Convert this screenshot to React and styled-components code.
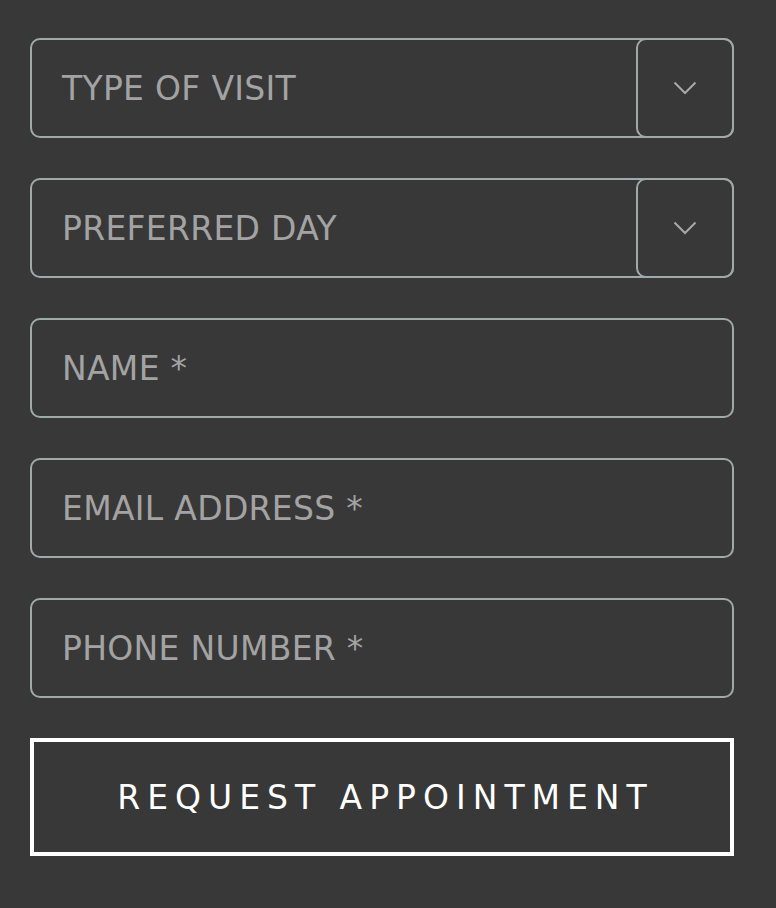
import React from 'react';
import styled, { createGlobalStyle } from 'styled-components';

const Global = createGlobalStyle`
  html, body {
    margin: 0;
    padding: 0;
    background: #383838;
  }
`;

const Form = styled.form`
  width: 704px;
  padding: 38px 0 52px 30px;

  display: flex;
  flex-direction: column;
  gap: 40px;

  font-family: "DejaVu Sans", "Noto Sans", sans-serif;
`;

const Field = styled.div`
  box-sizing: border-box;
  height: 100px;

  display: flex;
  align-items: stretch;

  border: 2px solid #9eaba9;
  border-radius: 10px;
`;

const Label = styled.div`
  flex: 1;
  display: flex;
  align-items: center;
  padding-left: 30px;

  color: #a3a3a3;
  font-size: 33px;
  letter-spacing: 0.3px;
`;

const TextInput = styled.input`
  flex: 1;
  min-width: 0;
  padding: 0 0 0 30px;

  border: none;
  outline: none;
  background: transparent;

  color: #a3a3a3;
  font-family: inherit;
  font-size: 33px;
  letter-spacing: 0.3px;

  &::placeholder {
    color: #a3a3a3;
    opacity: 1;
  }
`;

const Toggle = styled.div`
  box-sizing: border-box;
  width: 98px;
  margin: -2px -2px -2px 0;

  display: flex;
  align-items: center;
  justify-content: center;

  border: 2px solid #9eaba9;
  border-radius: 10px;
`;

const Submit = styled.button`
  box-sizing: border-box;
  height: 118px;
  padding: 0 0 0 7px;

  border: 4px solid #fff;
  background: transparent;

  color: #fff;
  font-family: inherit;
  font-size: 33px;
  letter-spacing: 7px;
  cursor: pointer;
`;

const Chevron = () => (
  <svg width="24" height="14" viewBox="0 0 24 14" fill="none">
    <path d="M1.5 1.5 L12 12 L22.5 1.5" stroke="#a8a8a8" strokeWidth="2" />
  </svg>
);

function Select({ label }) {
  return (
    <Field>
      <Label>{label}</Label>
      <Toggle>
        <Chevron />
      </Toggle>
    </Field>
  );
}

function Input({ placeholder }) {
  return (
    <Field>
      <TextInput placeholder={placeholder} />
    </Field>
  );
}

export default function App() {
  return (
    <>
      <Global />
      <Form onSubmit={(e) => e.preventDefault()}>
        <Select label="TYPE OF VISIT" />
        <Select label="PREFERRED DAY" />
        <Input placeholder="NAME *" />
        <Input placeholder="EMAIL ADDRESS *" />
        <Input placeholder="PHONE NUMBER *" />
        <Submit type="submit">REQUEST APPOINTMENT</Submit>
      </Form>
    </>
  );
}
